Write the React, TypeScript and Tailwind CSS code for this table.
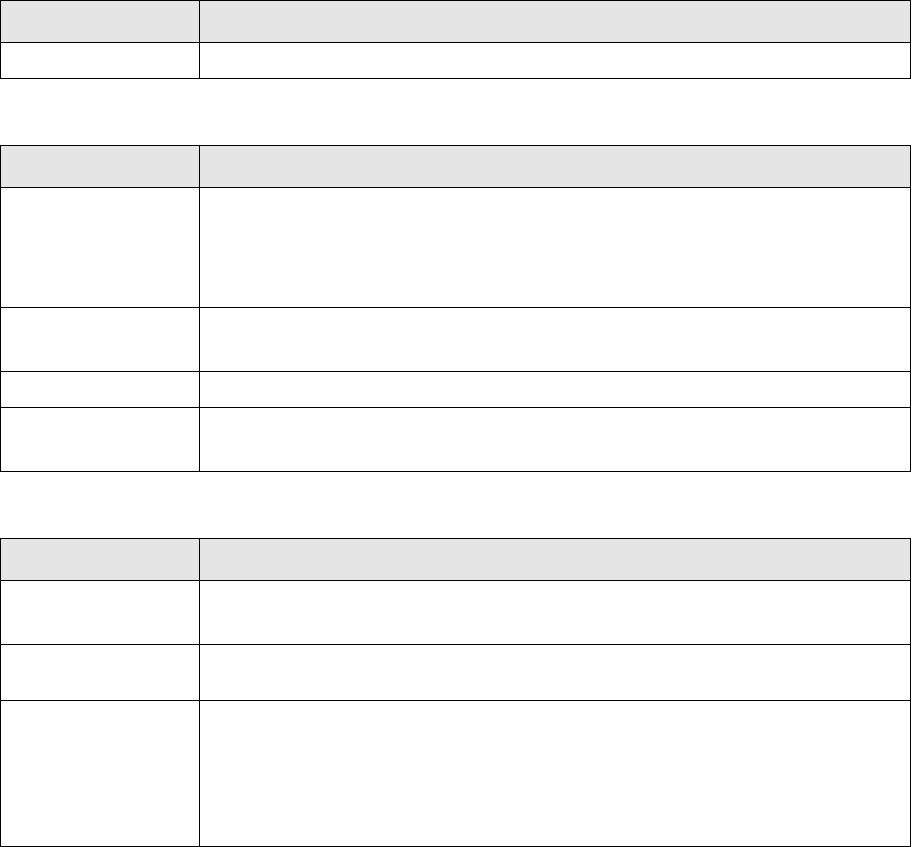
import React from 'react';

type Table = { rows: number[] };

// heights are measured line-to-line; the last row loses 1px to the table's bottom border
const TABLES: Table[] = [
  { rows: [36] },
  { rows: [120, 64, 36, 64] },
  { rows: [64, 56, 146] },
];

const Row: React.FC<{ height: number; header?: boolean; last?: boolean }> = ({ height, header, last }) => (
  <div
    className={`grid grid-cols-[199px_1fr] ${header ? 'bg-[#e5e5e5]' : 'bg-white'} ${last ? '' : 'border-b border-black'}`}
    style={{ height: last ? height - 1 : height }}
  >
    <div className="border-r border-black" />
    <div />
  </div>
);

export default function App() {
  return (
    <div className="min-h-screen bg-white font-['Liberation_Sans',Arial,sans-serif]">
      <div className="flex flex-col gap-[66px] w-[911px]">
        {TABLES.map((t, i) => (
          <div key={i} className="border border-black">
            <Row height={42} header />
            {t.rows.map((h, j) => (
              <Row key={j} height={h} last={j === t.rows.length - 1} />
            ))}
          </div>
        ))}
      </div>
    </div>
  );
}
